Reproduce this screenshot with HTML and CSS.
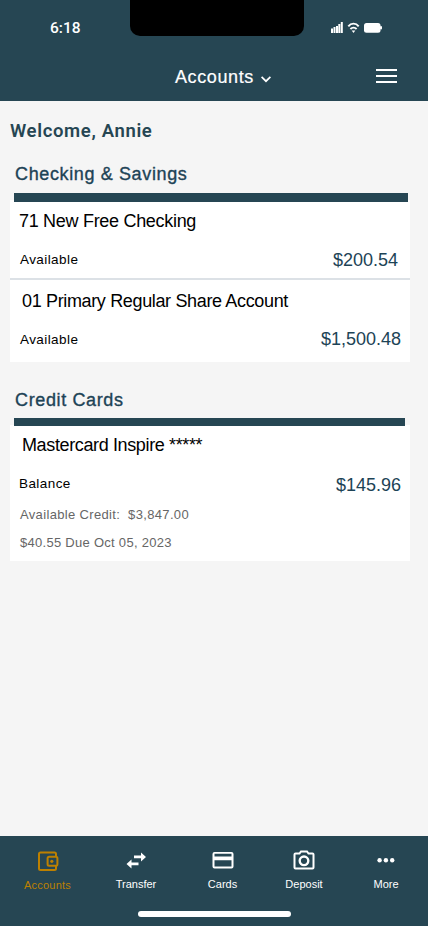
FILE: index.html
```html
<!DOCTYPE html>
<html lang="en">
<head>
<meta charset="utf-8">
<meta name="viewport" content="width=device-width, initial-scale=1">
<title>Accounts</title>
<link rel="stylesheet" href="styles.css">
</head>
<body>
<div class="app">
  <header class="header">
    <div class="status">
      <span class="time">6:18</span>
      <div class="notch"></div>
      <svg class="signals" width="52" height="12" viewBox="0 0 52 12" fill="#fff">
        <path d="M0 6.500h2V11H0zM2.500 5h2v6h-2zM5 4h2v7H5zM7.300 2h2v9h-2zM9.800 0h2v11h-2z"/>
        <g fill="none" stroke="#fff" stroke-width="1.900"><path d="M17.300 4.300c2.800-3.600 7.600-3.600 10.400 0M19.400 7c1.800-1.800 4.400-1.800 6.200 0"/></g>
        <path d="M20.700 8.600h3.600l-1.800 2.300z"/>
        <rect x="33" y="1" width="16.500" height="9.700" rx="2.500"/><rect x="49" y="4" width="2" height="3.500" rx="1"/>
      </svg>
    </div>
    <div class="titlebar">
      <div class="title">Accounts</div>
      <svg class="chevron" width="10" height="7" viewBox="0 0 10 7" fill="none" stroke="#fff" stroke-width="1.700"><path d="M.6 .9L5 5.200 9.400 .9"/></svg>
      <div class="menu"><i></i><i></i><i></i></div>
    </div>
  </header>

  <main class="content">
    <h1 class="welcome">Welcome, Annie</h1>
    <h2 class="section-title checking-title">Checking &amp; Savings</h2>
    <section class="panel checking">
      <div class="bar"></div>
      <article class="account">
        <h3 class="name free">71 New Free Checking</h3>
        <div class="row"><span class="label">Available</span><span class="amount">$200.54</span></div>
      </article>
      <article class="account second">
        <h3 class="name share">01 Primary Regular Share Account</h3>
        <div class="row"><span class="label">Available</span><span class="amount">$1,500.48</span></div>
      </article>
    </section>
    <h2 class="section-title cards-title">Credit Cards</h2>
    <section class="panel credit">
      <div class="bar"></div>
      <h3 class="name card-name">Mastercard Inspire *****</h3>
      <div class="row"><span class="label">Balance</span><span class="amount">$145.96</span></div>
      <p class="detail">Available Credit:&nbsp; $3,847.00</p>
      <p class="detail due">$40.55 Due Oct 05, 2023</p>
    </section>
  </main>

  <footer class="footer">
    <nav class="nav">
      <a class="tab active">
        <svg width="24" height="24" viewBox="0 0 24 24" fill="none" stroke="currentColor" stroke-width="2"><path d="M20 8V5Q20 3.500 18.500 3.500H4.500Q3 3.500 3 5V19.500Q3 21 4.500 21H18.500Q20 21 20 19.500V17"/><rect x="11.600" y="7.800" width="9.800" height="9" rx="1.500"/><circle cx="15.800" cy="12.300" r="1.600" fill="currentColor" stroke="none"/></svg>
        <span>Accounts</span>
      </a>
      <a class="tab">
        <svg width="24" height="24" viewBox="0 0 24 24" fill="currentColor"><path d="M10 7.600h7V4.400L22 9l-5 4.500v-3.200h-7zM14.500 17.300h-7v3.100L2.500 15.900l5-4.500v3.200h7z"/></svg>
        <span>Transfer</span>
      </a>
      <a class="tab">
        <svg width="24" height="24" viewBox="0 0 24 24" fill="currentColor"><path fill-rule="evenodd" d="M3.500 4h17A2 2 0 0 1 22.500 6v12.500a2 2 0 0 1-2 2h-17a2 2 0 0 1-2-2V6a2 2 0 0 1 2-2zm0 1.800V8.500h17V5.800zm0 6.400v6.300h17v-6.300z"/></svg>
        <span>Cards</span>
      </a>
      <a class="tab">
        <svg width="24" height="24" viewBox="0 0 24 24" fill="none" stroke="currentColor" stroke-width="2"><path d="M2.500 6.500Q2.500 5.500 3.500 5.500H7.500L9 3.500H15L16.500 5.500H20.500Q21.500 5.500 21.500 6.500V19.500Q21.500 20.500 20.500 20.500H3.500Q2.500 20.500 2.500 19.500Z"/><circle cx="12" cy="12.800" r="4.300" stroke-width="2.400"/></svg>
        <span>Deposit</span>
      </a>
      <a class="tab">
        <svg width="24" height="24" viewBox="0 0 24 24" fill="currentColor"><circle cx="5.600" cy="12.200" r="2.200"/><circle cx="11.900" cy="12.200" r="2.200"/><circle cx="18.200" cy="12.200" r="2.200"/></svg>
        <span>More</span>
      </a>
    </nav>
    <div class="home"></div>
  </footer>
</div>
</body>
</html>
```
FILE: styles.css
```css
* { box-sizing: border-box; }
body { margin: 0; font-family: "Liberation Sans", Arial, sans-serif; }
h1, h2, h3, p { margin: 0; font-weight: 400; white-space: nowrap; }
svg { display: block; flex: none; }
.app { width: 428px; height: 926px; display: flex; flex-direction: column; background: #f5f5f5; overflow: hidden; }

.header { height: 101px; background: #264653; color: #fff; }
.status { height: 56px; display: grid; grid-template-columns: 130px 174px 124px; align-items: start; }
.time { padding: 18px 0 0 50px; font: 500 15.500px/20px Roboto, sans-serif; letter-spacing: 0; }
.notch { height: 36px; background: #000; border-radius: 0 0 10px 10px; }
.signals { margin: 22px 0 0 27px; }
.titlebar { height: 42px; display: flex; align-items: center; padding: 0 31px 0 175px; }
.title { width: 80px; font-size: 18px; line-height: 22px; letter-spacing: .6px; white-space: nowrap; -webkit-text-stroke: .2px; }
.chevron { margin: 4px 0 0 6px; }
.menu { width: 21px; margin: -2px 0 0 auto; display: grid; gap: 4px; }
.menu i { height: 2px; background: #fff; }

.content { flex: 1; padding: 18px 18px 0 10px; }
.welcome { height: 24px; color: #264653; font: 600 18.500px/24px Roboto, sans-serif; letter-spacing: .65px; }
.section-title { padding-left: 5px; height: 22px; color: #1d4356; font-size: 18px; line-height: 22px; letter-spacing: .63px; -webkit-text-stroke: .35px; }
.checking-title { margin-top: 20px; }
.cards-title { margin-top: 27px; }
.panel { background: linear-gradient(#f5f5f5 7px, #fff 7px); }
.checking { margin-top: 8px; height: 169px; }
.bar { height: 9px; margin: 0 2px 0 4px; background: #264653; }
.account { height: 76px; padding: 8px 12px 0 10px; }
.second { height: 84px; padding: 10px 9px 0 10px; border-top: 2px solid #dce1e6; }
.name { height: 22px; color: #000; font-size: 18px; line-height: 22px; }
.free { letter-spacing: -.3px; margin-left: -1px; }
.share { letter-spacing: -.35px; margin-left: 2px; }
.row { display: flex; justify-content: space-between; align-items: center; height: 22px; margin-top: 17px; }
.second .row { margin-top: 16px; }
.label { color: #000; font-size: 13.500px; line-height: 18px; letter-spacing: .42px; }
.second .label { padding-top: 2px; }
.amount { color: #1d4356; font-size: 18px; }
.credit { margin-top: 7px; height: 143px; padding: 0 9px 0 10px; }
.credit .bar { height: 8px; margin: 0 -4px 0 -6px; }
.credit .row { margin-top: 18px; }
.credit .label { margin-left: -1px; padding-bottom: 2px; }
.card-name { margin: 8px 0 0 2px; letter-spacing: -.37px; }
.detail { margin-top: 10px; color: #666; font-size: 13px; line-height: 18px; letter-spacing: .34px; }
.due { margin-top: 10px; letter-spacing: .28px; }

.footer { height: 90px; background: #264653; color: #fff; }
.nav { height: 74px; display: grid; grid-template-columns: 95px 82px 91px 72px 92px; padding-top: 12px; }
.tab { display: flex; flex-direction: column; align-items: center; font-size: 11px; line-height: 14px; gap: 5px; color: #fff; }
.active { color: #bd8000; padding-top: 1px; letter-spacing: .2px; }
.home { width: 153px; height: 6px; margin: 1px auto 0 138px; border-radius: 3px; background: #fff; }
```
